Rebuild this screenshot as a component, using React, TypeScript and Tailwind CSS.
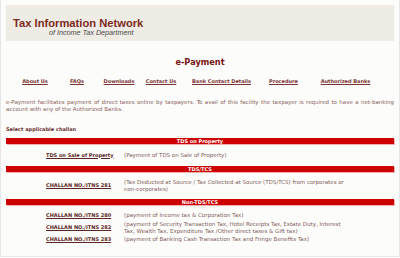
const nav = [
  { label: 'About Us', w: 'w-[42px]' },
  { label: 'FAQs', w: 'w-[42px]' },
  { label: 'Downloads', w: 'w-[42px]' },
  { label: 'Contact Us', w: 'w-[42px]' },
  { label: 'Bank Contact Details', w: 'w-[79px]' },
  { label: 'Procedure', w: 'w-[45px]' },
  { label: 'Authorized Banks', w: 'w-[79px]' },
];

function Bar({ title }: { title: string }) {
  return (
    <div className="h-[6px] bg-[#cc0000] text-center text-[5px] font-bold leading-[6px] text-white shadow-[1px_1px_0_#f2b0b0]">
      {title}
    </div>
  );
}

function Row({ link, children }: { link: string; children: React.ReactNode }) {
  return (
    <div className="flex items-center">
      <div className="w-[118px] shrink-0 pl-[40px]">
        <a className="whitespace-nowrap text-[5px] font-bold text-[#5a2626] underline">{link}</a>
      </div>
      <div className="text-[5.5px] text-[#7e5c5c]">{children}</div>
    </div>
  );
}

export default function App() {
  return (
    <div className="h-[257px] w-[400px] border-x border-b border-[#e6e6e6] bg-[#fcfcfa] px-[5px] pt-[5px] font-['DejaVu_Sans',sans-serif] text-[5px] leading-[7px]">
      {/* header */}
      <div className="flex h-[36px] flex-col bg-[#efece5] pl-[7px] pt-[13px] font-['Liberation_Sans',Arial,sans-serif]">
        <div className="text-[11.2px] font-bold leading-[11px] text-[#7d2a1e]">Tax Information Network</div>
        <div className="ml-[36px] text-[7.2px] italic leading-[7px] text-[#4a4a4a]">of Income Tax Department</div>
      </div>

      <h1 className="mt-[16px] text-center text-[8.2px] font-bold leading-[11px] text-[#7a1414]">e-Payment</h1>

      {/* nav */}
      <nav className="mt-[10px] flex pl-[8px]">
        {nav.map(({ label, w }) => (
          <a key={label} className={`${w} whitespace-nowrap text-center font-bold text-[#7a3434] underline`}>
            {label}
          </a>
        ))}
      </nav>

      <p className="mt-[14px] text-justify text-[5.5px] text-[#8a6262] [text-align-last:left]">
        e-Payment facilitates payment of direct taxes online by taxpayers. To avail of this facility the taxpayer is required to have a net-banking account with any of the Authorized Banks.
      </p>

      <div className="mt-[13px] font-bold text-[#6a2e2e]">Select applicable challan</div>

      <div className="mt-[5px]">
        <Bar title="TDS on Property" />
        <div className="flex h-[22px] items-center">
          <Row link="TDS on Sale of Property">(Payment of TDS on Sale of Property)</Row>
        </div>
        <Bar title="TDS/TCS" />
        <div className="flex h-[27px] items-center">
          <Row link="CHALLAN NO./ITNS 281">
            (Tax Deducted at Source / Tax Collected at Source (TDS/TCS) from corporates or
            <br />
            non-corporates)
          </Row>
        </div>
        <Bar title="Non-TDS/TCS" />
        <div className="flex flex-col gap-[1.5px] pt-[7px]">
          <Row link="CHALLAN NO./ITNS 280">(payment of Income tax &amp; Corporation Tax)</Row>
          <Row link="CHALLAN NO./ITNS 282">
            (payment of Security Transaction Tax, Hotel Receipts Tax, Estate Duty, Interest
            <br />
            Tax, Wealth Tax, Expenditure Tax /Other direct taxes &amp; Gift tax)
          </Row>
          <Row link="CHALLAN NO./ITNS 283">(payment of Banking Cash Transaction Tax and Fringe Benefits Tax)</Row>
        </div>
      </div>
    </div>
  );
}
